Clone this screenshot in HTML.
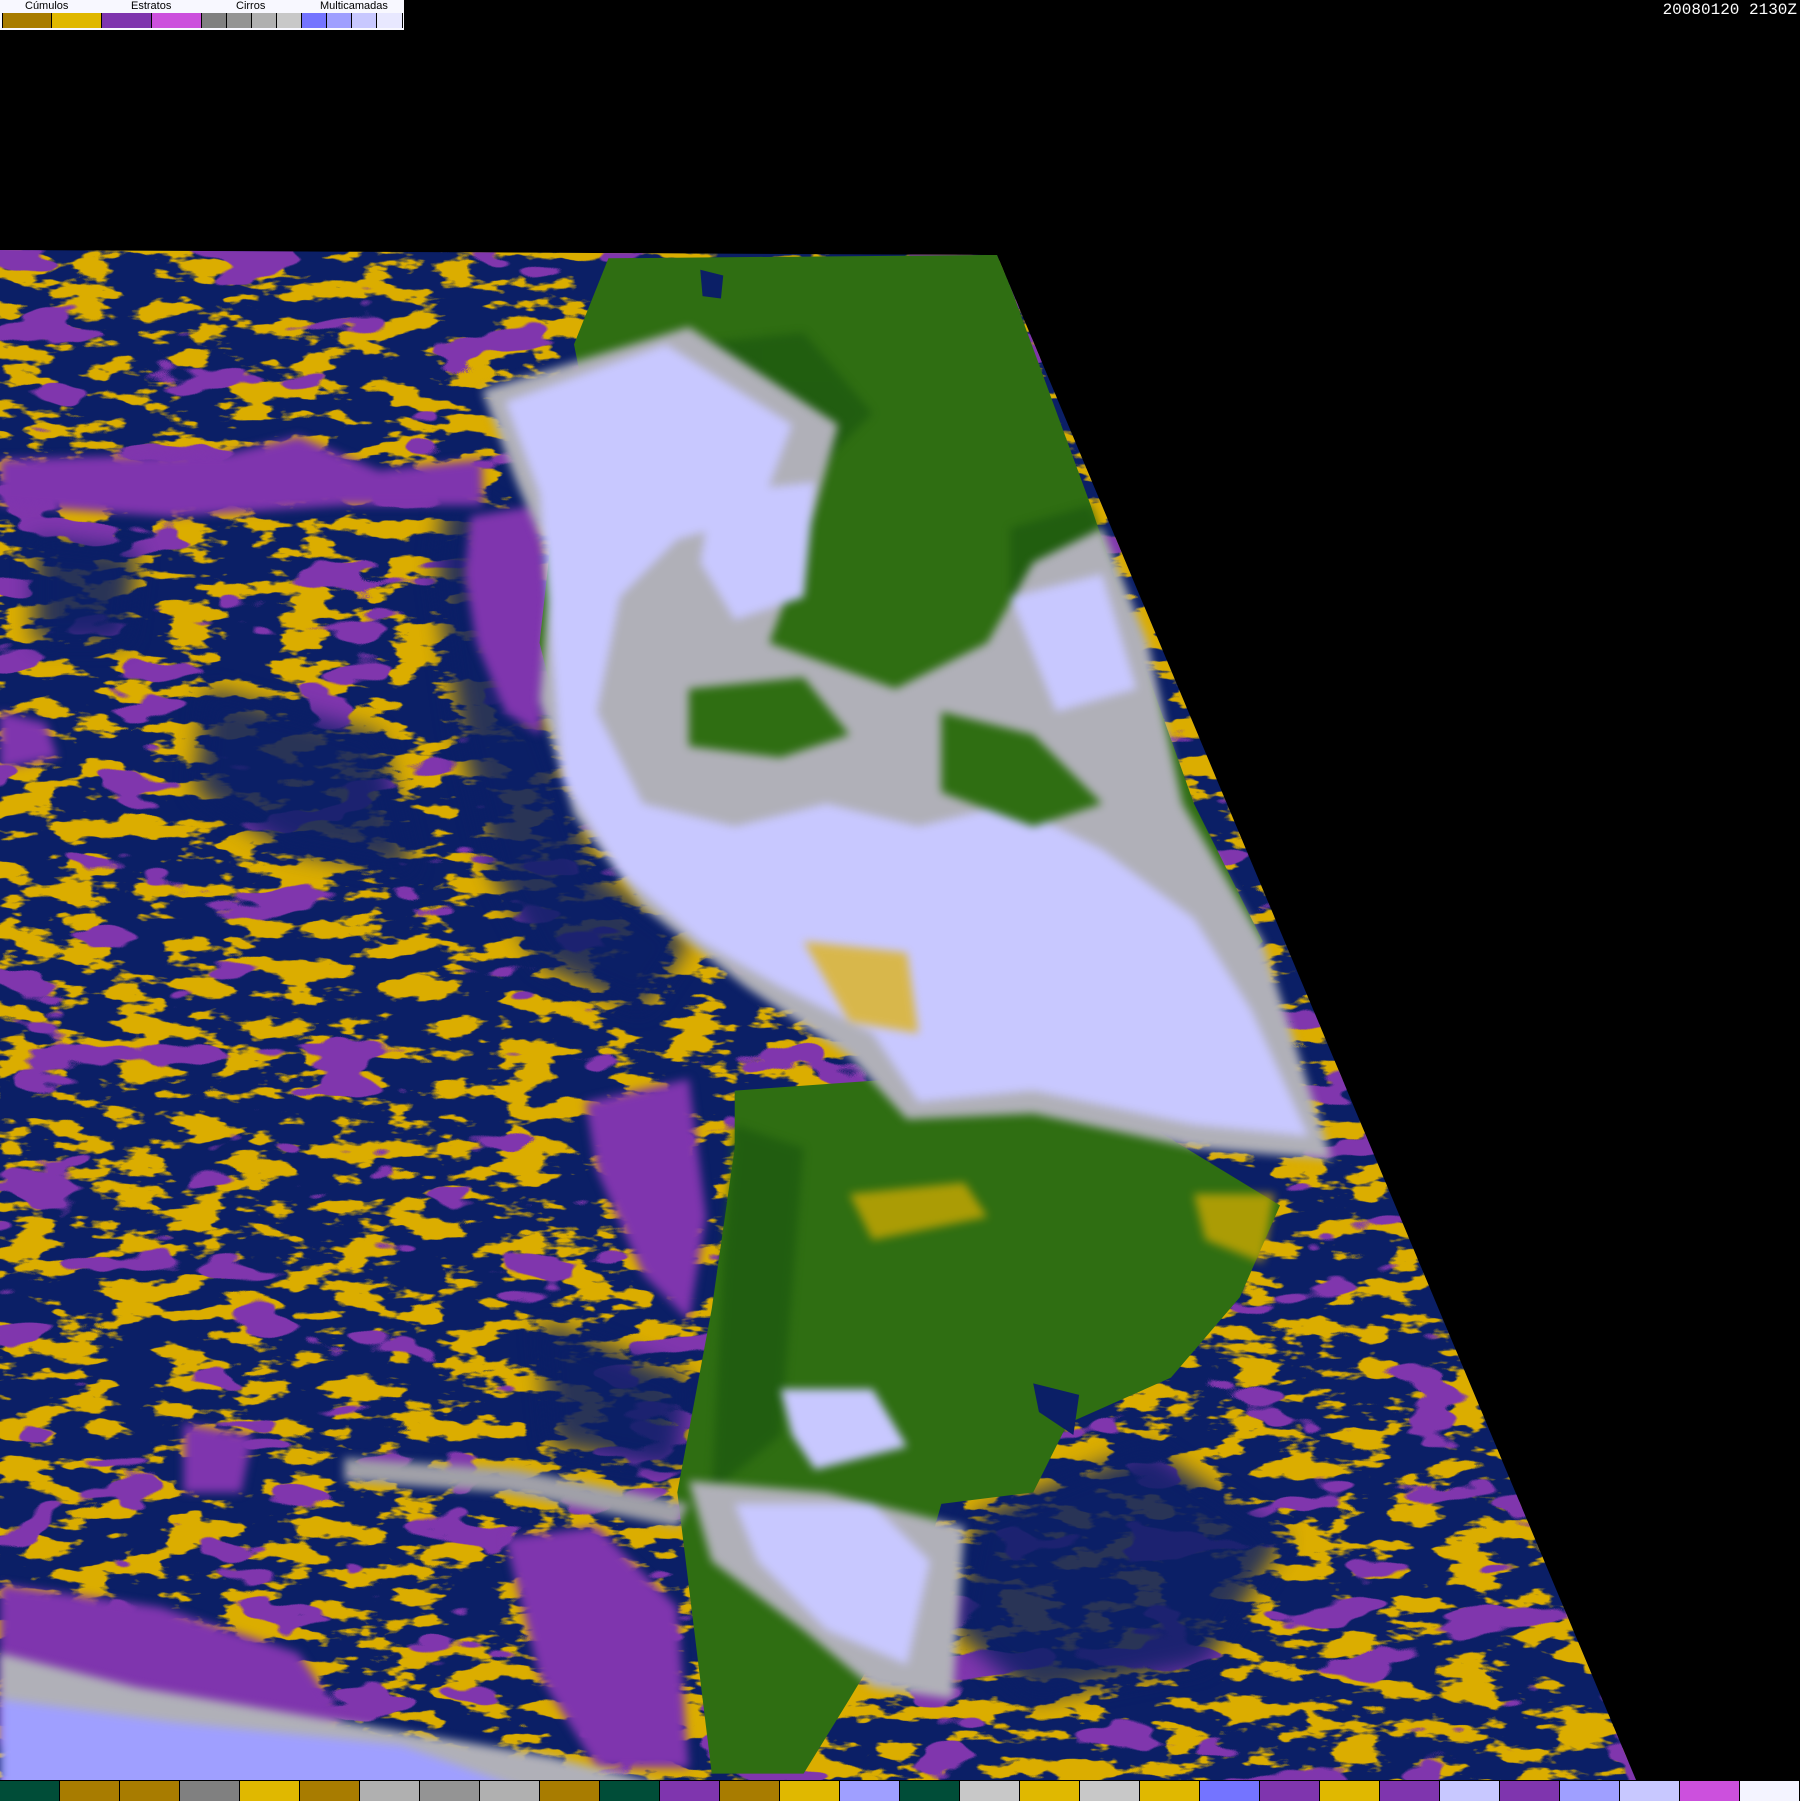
<!DOCTYPE html>
<html><head><meta charset="utf-8"><style>
html,body{margin:0;padding:0;background:#000;width:1800px;height:1800px;overflow:hidden}
#map{position:absolute;left:0;top:0}
#leg{position:absolute;left:0;top:0;width:404px;height:30px;background:#f8f8ff;font-family:"Liberation Sans",sans-serif;font-size:11px;color:#000}
#leg span{position:absolute;top:0;line-height:13px}
#leg i{position:absolute;top:13px;height:15px;border-left:1px solid #000}
#ts{position:absolute;right:3px;top:1px;color:#fff;font-family:"Liberation Mono",monospace;font-size:16px}
#bar{position:absolute;left:0;top:1780px;width:1800px;height:20px;display:flex;border-top:1px solid #000}
#bar b{flex:1;border-right:1px solid #000}
filter{color-interpolation-filters:sRGB}
</style></head><body>
<svg id="map" width="1800" height="1800" viewBox="0 0 1800 1800">
<defs>
<clipPath id="cp"><polygon points="0,250 997,255 1636,1780 0,1780"/></clipPath>
<filter id="tz" x="0" y="0" width="100%" height="100%" color-interpolation-filters="sRGB">
<feTurbulence type="fractalNoise" baseFrequency="0.018 0.05" numOctaves="4" seed="3"/>
<feColorMatrix type="matrix" values="0 0 0 0 0.86  0 0 0 0 0.68  0 0 0 0 0  14 0 0 0 -7.2"/>
</filter>
<filter id="tp" x="0" y="0" width="100%" height="100%" color-interpolation-filters="sRGB">
<feTurbulence type="fractalNoise" baseFrequency="0.01 0.025" numOctaves="3" seed="9"/>
<feColorMatrix type="matrix" values="0 0 0 0 0.5  0 0 0 0 0.21  0 0 0 0 0.68  0 30 0 0 -19"/>
</filter>
<filter id="bl"><feGaussianBlur stdDeviation="4"/></filter>
<filter id="bl2"><feGaussianBlur stdDeviation="10"/></filter>
</defs>
<g clip-path="url(#cp)">
<rect x="0" y="240" width="1800" height="1560" fill="#0b1f66"/>
<rect x="0" y="240" width="1800" height="1560" filter="url(#tz)"/>
<rect x="0" y="240" width="1800" height="1560" filter="url(#tp)"/>
<g transform="scale(1.148)">
<g fill="#0b1f66" filter="url(#bl2)" opacity="0.85">
<path d="M390,420 L470,470 L470,620 L520,760 L600,820 L560,880 L470,840 L430,760 L400,640 L380,500Z"/>
<path d="M180,600 L330,640 L360,760 L250,740 L170,690Z"/>
<path d="M470,1150 L600,1200 L590,1280 L480,1260Z"/>
<path d="M850,1320 L1000,1260 L1120,1340 L1050,1450 L900,1480 L830,1420Z"/>
<path d="M30,470 L120,480 L110,560 L30,560Z"/>
</g>
<g fill="#7f35ae" filter="url(#bl)">
<path d="M0,400 L200,395 L260,380 L330,410 L420,400 L420,440 L300,440 L150,450 L0,440Z"/>
<path d="M410,450 L470,440 L480,540 L470,640 L440,620 L415,560 L405,500Z"/>
<path d="M510,960 L600,940 L615,1060 L600,1150 L560,1110 L520,1020Z"/>
<path d="M0,1380 L140,1400 L260,1440 L300,1500 L200,1540 L60,1540 L0,1520Z"/>
<path d="M440,1340 L520,1330 L590,1400 L600,1540 L520,1540 L470,1460Z"/>
<path d="M0,620 L40,630 L50,660 L0,670Z"/>
<path d="M160,1240 L220,1250 L210,1300 L160,1300Z"/>
</g>
<g fill="#2f6e12">
<path d="M530,225 L870,222 L950,440 L990,560 L1040,700 L1100,820 L1040,880 L900,830 L760,760 L640,800 L560,760 L500,680 L470,560 L480,470 L520,400 L500,300Z"/>
<path d="M640,950 L780,940 L1000,980 L1115,1050 L1080,1130 L1020,1200 L930,1240 L900,1300 L820,1310 L800,1380 L740,1480 L700,1545 L620,1545 L590,1300 L620,1140 L640,1000Z"/>
</g>
<g fill="#1e5a10" opacity="0.8" filter="url(#bl)">
<path d="M600,300 L700,290 L760,360 L700,420 L620,380Z"/>
<path d="M880,460 L950,440 L990,560 L930,580 L880,520Z"/>
<path d="M500,520 L580,540 L560,620 L500,600Z"/>
<path d="M640,980 L700,1000 L680,1250 L620,1300 L630,1100Z"/>
<path d="M940,640 L1020,700 L1000,740 L920,700Z"/>
</g>
<path d="M610,235 L630,240 L628,260 L612,258Z" fill="#0b1f66"/>
<path d="M900,1205 L940,1215 L935,1250 L905,1230Z" fill="#0b1f66"/>
<g filter="url(#bl)">
<path fill="#b0b0b8" d="M420,340 L600,285 L730,370 L700,480 L670,560 L780,600 L860,560 L900,490 L960,460 L1000,560 L1030,700 L1100,820 L1160,1010 L1040,1000 L900,970 L790,975 L740,920 L650,860 L560,790 L500,710 L470,610 L480,490 L450,420Z"/>
<path fill="#c8c8ff" d="M440,350 L580,300 L690,370 L660,450 L590,470 L540,520 L520,620 L560,700 L640,720 L720,700 L800,720 L880,700 L960,740 L1040,800 L1090,880 L1140,990 L1040,980 L900,950 L800,960 L760,900 L680,860 L610,820 L540,760 L490,680 L480,560 L470,430Z"/>
<path fill="#c8c8ff" d="M620,430 L710,420 L700,520 L640,540 L610,490Z"/>
<path fill="#c8c8ff" d="M880,520 L960,500 L990,600 L920,620Z"/>
<path fill="#2f6e12" d="M600,600 L700,590 L740,640 L680,660 L600,650Z"/>
<path fill="#2f6e12" d="M820,620 L900,640 L960,700 L900,720 L820,690Z"/>
<path fill="#b0b0b8" d="M600,1290 L720,1300 L840,1330 L830,1480 L760,1470 L700,1420 L620,1360Z"/>
<path fill="#c8c8ff" d="M640,1310 L760,1310 L810,1360 L790,1450 L720,1420 L660,1360Z"/>
<path fill="#c8c8ff" d="M680,1210 L760,1210 L790,1260 L710,1280 L690,1250Z"/>
<path fill="#a0a0a8" d="M300,1270 L450,1280 L600,1310 L590,1330 L440,1300 L300,1290Z"/>
<path fill="#b0b0b8" d="M0,1440 L120,1470 L300,1500 L480,1530 L600,1560 L0,1560Z"/>
<path fill="#9f9fff" d="M0,1480 L150,1500 L350,1520 L460,1560 L0,1560Z"/>
</g>
<g fill="#e0b000" opacity="0.7" filter="url(#bl)">
<path d="M700,820 L790,830 L800,900 L740,890Z"/>
<path d="M1040,1040 L1110,1040 L1100,1100 L1050,1080Z"/>
<path d="M740,1040 L840,1030 L860,1060 L760,1080Z"/>
</g>
</g>
</g>
</svg>
<div id="leg">
<span style="left:25px">Cúmulos</span><span style="left:131px">Estratos</span><span style="left:236px">Cirros</span><span style="left:320px">Multicamadas</span>
<i style="left:2px;width:49px;background:#a87c00"></i>
<i style="left:51px;width:50px;background:#e0b800"></i>
<i style="left:101px;width:50px;background:#7f35ae"></i>
<i style="left:151px;width:50px;background:#cc50dd"></i>
<i style="left:201px;width:25px;background:#808080"></i>
<i style="left:226px;width:25px;background:#949494"></i>
<i style="left:251px;width:25px;background:#b0b0b0"></i>
<i style="left:276px;width:25px;background:#c8c8c8"></i>
<i style="left:301px;width:25px;background:#7474ff"></i>
<i style="left:326px;width:25px;background:#9f9fff"></i>
<i style="left:351px;width:25px;background:#c8c8ff"></i>
<i style="left:376px;width:25px;background:#e8e8ff;border-right:1px solid #000"></i>
</div>
<div id="ts">20080120 2130Z</div>
<div id="bar">
<b style="background:#004d38"></b><b style="background:#a87c00"></b><b style="background:#a87c00"></b><b style="background:#808080"></b><b style="background:#e0b800"></b><b style="background:#a87c00"></b><b style="background:#b0b0b0"></b><b style="background:#949494"></b><b style="background:#b0b0b0"></b><b style="background:#a87c00"></b><b style="background:#004d38"></b><b style="background:#7f35ae"></b><b style="background:#a87c00"></b><b style="background:#e0b800"></b><b style="background:#9f9fff"></b><b style="background:#004d38"></b><b style="background:#c8c8c8"></b><b style="background:#e0b800"></b><b style="background:#c8c8c8"></b><b style="background:#e0b800"></b><b style="background:#7474ff"></b><b style="background:#7f35ae"></b><b style="background:#e0b800"></b><b style="background:#7f35ae"></b><b style="background:#c8c8ff"></b><b style="background:#7f35ae"></b><b style="background:#9f9fff"></b><b style="background:#c8c8ff"></b><b style="background:#cc50dd"></b><b style="background:#f4f4ff"></b>
</div>
</body></html>
